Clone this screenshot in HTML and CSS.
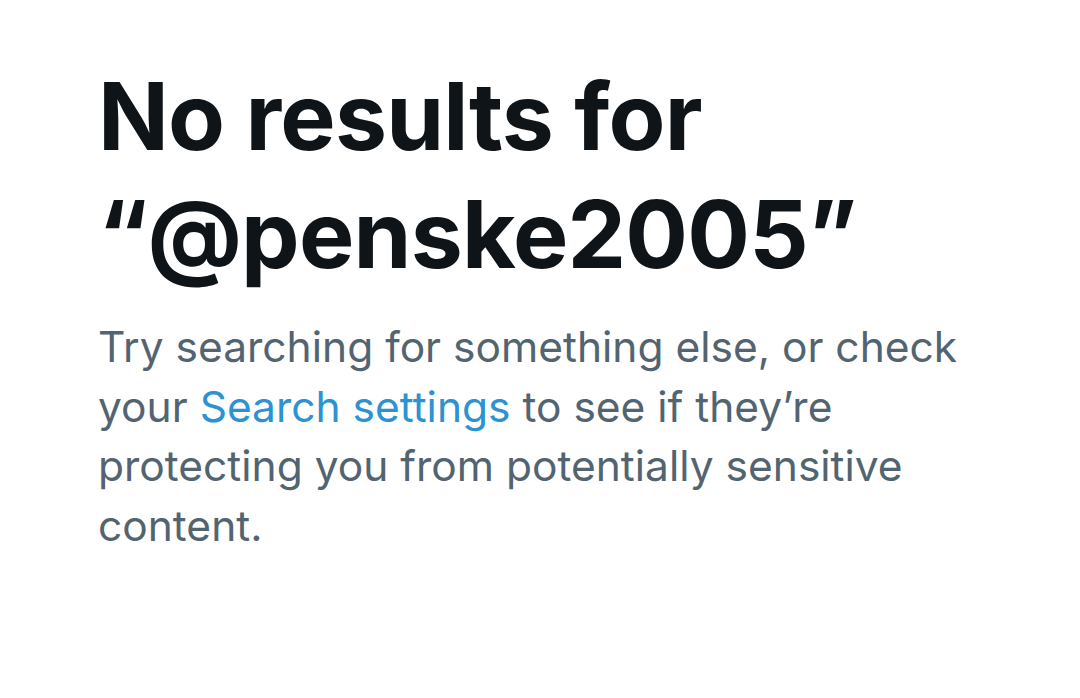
FILE: index.html
```html
<!DOCTYPE html>
<html>
<head>
<meta charset="utf-8">
<link rel="stylesheet" href="styles.css">
</head>
<body>
<main class="empty">
  <h1 class="title">No results for “@penske2005”</h1>
  <p class="desc">Try searching for something else, or check your <a class="link" href="#">Search settings</a> to see if they’re protecting you from potentially sensitive content.</p>
</main>
</body>
</html>
```
FILE: styles.css
```css
html, body {
  margin: 0;
  padding: 0;
  background: #ffffff;
}
.empty {
  padding: 57px 100px 0 98px;
  max-width: 882px;
  font-family: Inter, "Noto Sans", sans-serif;
}
.title {
  margin: 0;
  font-size: 93px;
  line-height: 118px;
  font-weight: 700;
  color: #0f1419;
  letter-spacing: -0.8px;
}
.desc {
  margin: 24px 0 0;
  font-size: 42.5px;
  line-height: 59.5px;
  color: #536471;
  font-weight: 400;
}
.link {
  color: #2b93d1;
  text-decoration: none;
}
```
